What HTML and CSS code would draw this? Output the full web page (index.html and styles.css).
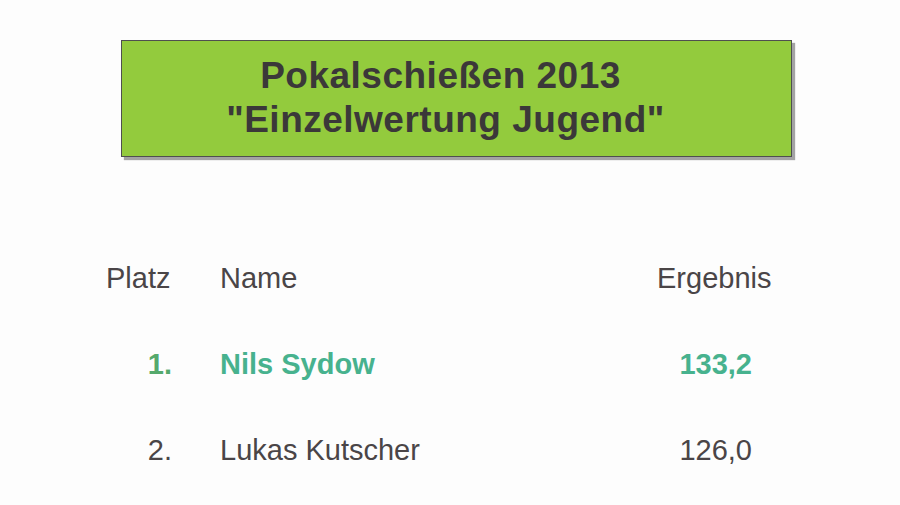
FILE: index.html
```html
<!DOCTYPE html>
<html lang="de">
<head>
<meta charset="utf-8">
<title>Pokalschießen 2013 – Einzelwertung Jugend</title>
<link rel="stylesheet" href="styles.css">
</head>
<body>
<main class="page">
  <header class="title-box">
    <h1 class="title">
      <span class="line line-1">Pokalschießen 2013</span>
      <span class="line line-2">"Einzelwertung Jugend"</span>
    </h1>
  </header>
  <section class="results">
    <div class="cell head col-place">Platz</div>
    <div class="cell head col-name">Name</div>
    <div class="cell head col-score">Ergebnis</div>

    <div class="cell col-place num winner-place">1.</div>
    <div class="cell col-name winner">Nils Sydow</div>
    <div class="cell col-score val winner">133,2</div>

    <div class="cell col-place num">2.</div>
    <div class="cell col-name">Lukas Kutscher</div>
    <div class="cell col-score val">126,0</div>
  </section>
</main>
</body>
</html>
```

FILE: styles.css
```css
html, body {
  margin: 0;
  padding: 0;
  background: #fdfdfd;
}
body {
  width: 900px;
  height: 505px;
  overflow: hidden;
  font-family: "Liberation Sans", Arial, sans-serif;
  color: #4a4547;
}
.page {
  padding-top: 40px;
}
.title-box {
  box-sizing: border-box;
  margin-left: 121px;
  width: 671px;
  height: 117px;
  background: #93cb3d;
  border: 1px solid #4f4f4f;
  box-shadow: 3px 3px 1px #a3a3a3;
  padding: 13px 26px 0 0;
}
.title {
  margin: 0;
  display: flex;
  flex-direction: column;
  align-items: center;
  font-size: 37px;
  line-height: 44px;
  font-weight: bold;
  letter-spacing: 0.5px;
  color: #3b3839;
}
.line-1 {
  padding-right: 6px;
}
.line-2 {
  padding-left: 4px;
}
.results {
  margin-top: 78px;
  display: grid;
  grid-template-columns: 66px 389px 116px;
  column-gap: 48px;
  padding-left: 106px;
  font-size: 29px;
  line-height: 86px;
}
.num {
  text-align: right;
}
.val {
  text-align: right;
  padding-right: 21px;
}
.winner {
  font-weight: bold;
  color: #47b28e;
}
.winner-place {
  font-weight: bold;
  color: #55a96c;
}
```
